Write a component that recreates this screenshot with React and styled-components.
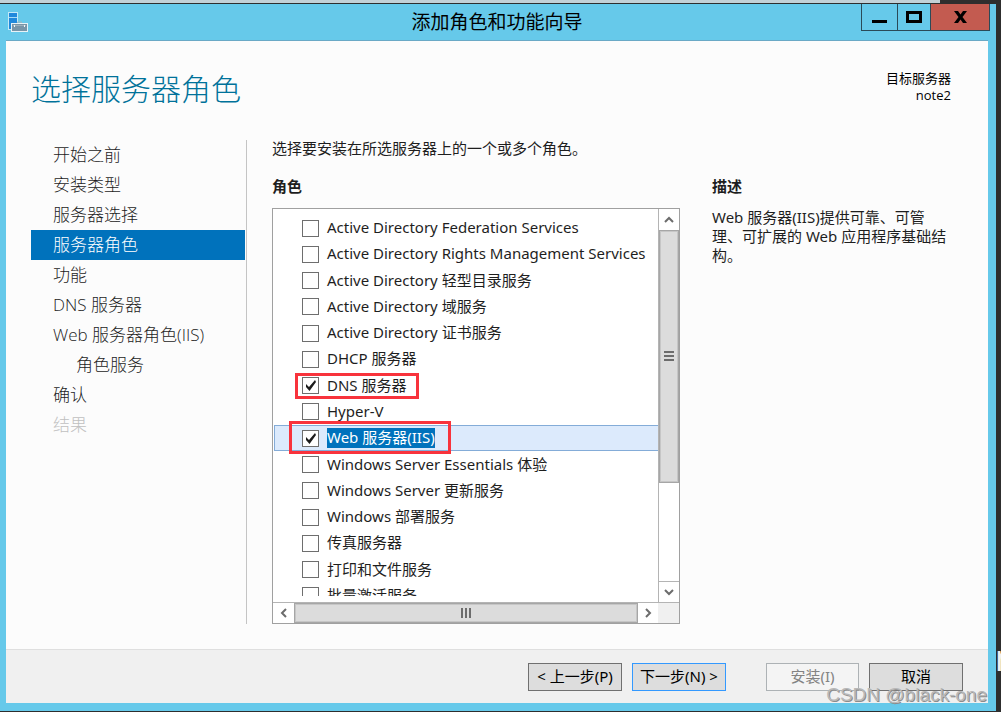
import { useState } from 'react';
import styled, { createGlobalStyle } from 'styled-components';


const GlobalStyle = createGlobalStyle`
    * {
        box-sizing: border-box;
    }

    body {
        margin: 0;
        background: #2e2e2e;
        color: #1e1e1e;
        font-family: 'Noto Sans', 'Noto Sans CJK SC', sans-serif;
        font-size: 15px;
        line-height: 20px;
    }

    button, input {
        font: inherit;
        margin: 0;
    }
`;

const Desktop = styled.div`
    position: relative;
    display: flex;
    flex-direction: column;
    height: 100vh;
    min-height: 480px;
    padding: 0 5px 1px 0;
    overflow: hidden;
`;

const BackgroundStrip = styled.div`
    flex: none;
    height: 3px;
    margin: 0 56px 1px 0;
    background: #c3d1d7;
`;

const BackgroundText = styled.span`
    position: absolute;
    right: -16px;
    bottom: 36px;
    color: #f0f0f0;
    font-size: 36px;
    line-height: 36px;
`;

const Window = styled.div`
    flex: 1;
    min-height: 0;
    display: flex;
    flex-direction: column;
    padding: 0 8px 8px 6px;
    background: #66c9ea;
`;

const TitleBar = styled.header`
    flex: none;
    display: grid;
    grid-template-columns: 129px 1fr 129px;
    height: 36px;
`;

const AppIcon = styled.svg`
    width: 20px;
    height: 20px;
    margin: 8px 0 0 2px;
`;

const WindowTitle = styled.div`
    padding-top: 4px;
    color: #000;
    font-size: 19px;
    line-height: 28px;
    text-align: center;
`;

const WindowControls = styled.div`
    display: flex;
    justify-content: flex-end;
    align-items: flex-start;
    margin-right: -2px;
`;

const ControlButton = styled.button`
    display: grid;
    place-items: center;
    width: ${(props) => props.$width};
    height: 27px;
    margin-left: -1px;
    padding: 0;
    border: 1px solid #2a4a58;
    border-top: 0;
    background: ${(props) => (props.$danger ? '#c35b50' : 'transparent')};
`;

const Client = styled.div`
    flex: 1;
    min-height: 0;
    display: flex;
    flex-direction: column;
    border-top: 1px solid #6aa9c6;
    background: #fcfcfc;
`;

const PageHeader = styled.div`
    flex: none;
    display: flex;
    justify-content: space-between;
    padding: 29px 37px 32px 25px;
`;

const PageTitle = styled.h1`
    margin: 0;
    color: #00729a;
    font-size: 30px;
    font-weight: 300;
    line-height: 38px;
`;

const Target = styled.div`
    color: #000;
    font-family: 'Open Sans', 'Noto Sans CJK SC', sans-serif;
    font-size: 13px;
    line-height: 17px;
    text-align: right;
`;

const PageBody = styled.div`
    flex: 1;
    min-height: 0;
    display: grid;
    grid-template-columns: 216px minmax(0, 1fr) 240px;
    padding: 0 36px 25px 25px;
`;

const Steps = styled.nav`
    padding-right: 1px;
    border-right: 1px solid #c4c4c4;
`;

const Step = styled.a`
    display: block;
    height: 30px;
    padding-left: ${(props) => (props.$nested ? '45px' : '22px')};
    background: ${(props) => (props.$current ? '#0072bc' : 'transparent')};
    color: ${(props) => (props.$current ? '#fff' : props.$disabled ? '#c0c0c0' : '#1c1c1c')};
    font-family: 'Open Sans', 'Noto Sans CJK SC', sans-serif;
    font-size: 17px;
    font-weight: 300;
    line-height: 30px;
    text-decoration: none;
    white-space: nowrap;
`;

const RolesColumn = styled.section`
    display: flex;
    flex-direction: column;
    min-height: 0;
    padding: 0 32px 0 25px;
`;

const Intro = styled.p`
    margin: 0 0 20px;
    line-height: 16px;
    white-space: nowrap;
`;

const Heading = styled.h2`
    margin: 0 0 12px;
    font-size: 15px;
    font-weight: 700;
    line-height: 20px;
`;

const ListBox = styled.div`
    flex: 1;
    min-height: 0;
    display: grid;
    grid-template-columns: minmax(0, 1fr) 21px;
    grid-template-rows: minmax(0, 1fr) 21px;
    border: 1px solid #a0a0a0;
    background: #fff;
`;

const Viewport = styled.div`
    margin-bottom: 6px;
    padding: 6px 0 0 1px;
    overflow: hidden;
`;

const RoleList = styled.ul`
    display: grid;
    grid-template-rows: repeat(15, minmax(0, 1fr));
    height: 394px;
    margin: 0;
    padding: 0;
    list-style: none;
`;

const RoleRow = styled.li`
    position: relative;
    display: flex;
    align-items: center;
    padding-left: 27px;
    border: 1px solid ${(props) => (props.$selected ? '#84acd8' : 'transparent')};
    border-right: 0;
    background: ${(props) => (props.$selected ? '#dceafc' : 'transparent')};
`;

const RoleLabel = styled.label`
    display: flex;
    align-items: center;
    gap: 8px;
    white-space: nowrap;
`;

const CheckWrap = styled.span`
    display: grid;
    flex: none;
    width: 17px;
    height: 17px;

    > * {
        grid-area: 1 / 1;
    }
`;

const CheckInput = styled.input`
    appearance: none;
    width: 17px;
    height: 17px;
    border: 1px solid #6e6e6e;
    background: #fff;
`;

const CheckMark = styled.svg`
    width: 17px;
    height: 17px;
    pointer-events: none;
`;

const RoleName = styled.span`
    height: 20px;
    line-height: 18px;
    background: ${(props) => (props.$selected ? '#0072bc' : 'transparent')};
    color: ${(props) => (props.$selected ? '#fff' : 'inherit')};
`;

// red annotation frame laid over a row
const Mark = styled.span`
    position: absolute;
    z-index: 1;
    inset: ${(props) => (props.$large ? '-5px auto -4px 14px' : '-1px auto -1px 20px')};
    width: ${(props) => (props.$large ? '162px' : '124px')};
    border: 3px solid #f8333c;
    pointer-events: none;
`;

const VerticalBar = styled.div`
    display: flex;
    flex-direction: column;
    border-left: 1px solid #b4b4b4;
`;

const HorizontalBar = styled.div`
    display: flex;
    padding-left: 1px;
    border-top: 1px solid #b4b4b4;
`;

const Corner = styled.div`
    border-top: 1px solid #b4b4b4;
    background: #f0f0f0;
`;

const Track = styled.div`
    flex: 1;
    min-height: 0;
    display: flex;
    flex-direction: column;
`;

const Thumb = styled.div`
    flex: none;
    display: grid;
    place-items: center;
    height: ${(props) => props.$size};
    border: 1px solid #a6a6a6;
    box-shadow: inset 0 0 0 1px #c6c6c6;
    background: #dcdcdc;
`;

const ArrowButton = styled.button`
    flex: none;
    display: grid;
    place-items: center;
    width: 20px;
    height: ${(props) => (props.$vertical ? '21px' : '20px')};
    padding: 0;
    border: 0 solid #b4b4b4;
    border-top-width: ${(props) => (props.$down ? '1px' : 0)};
    background: #fff;
`;

const Description = styled.section`
    padding-top: 36px;
`;

const DescriptionText = styled.p`
    margin: 0;
    line-height: 19px;
`;

const Footer = styled.footer`
    flex: none;
    display: flex;
    justify-content: flex-end;
    gap: 10px;
    padding: 13px 25px 12px;
    border-top: 1px solid #dfdfdf;
    background: #f0f0f0;
`;

const FooterButton = styled.button`
    width: 94px;
    height: 28px;
    padding: 0 0 2px;
    border: 1px solid ${(props) => (props.$primary ? '#3399ff' : '#707070')};
    background: #ddd;
    color: #000;
    line-height: 24px;
    white-space: nowrap;

    &:disabled {
        width: 93px;
        margin-left: 30px;
        border-color: #adb2b5;
        background: #f4f4f4;
        color: #838383;
    }
`;

const Watermark = styled.div`
    position: absolute;
    right: 14px;
    bottom: 5px;
    color: #b8b8b8;
    font-family: 'Liberation Sans', sans-serif;
    font-size: 19px;
    line-height: 24px;
    text-shadow: 1px 1px 0 #8c8c8c;
    pointer-events: none;
`;


const steps = [
    { label: '开始之前' },
    { label: '安装类型' },
    { label: '服务器选择' },
    { label: '服务器角色', current: true },
    { label: '功能' },
    { label: 'DNS 服务器' },
    { label: 'Web 服务器角色(IIS)' },
    { label: '角色服务', nested: true },
    { label: '确认' },
    { label: '结果', disabled: true },
];

const roles = [
    'Active Directory Federation Services',
    'Active Directory Rights Management Services',
    'Active Directory 轻型目录服务',
    'Active Directory 域服务',
    'Active Directory 证书服务',
    'DHCP 服务器',
    'DNS 服务器',
    'Hyper-V',
    'Web 服务器(IIS)',
    'Windows Server Essentials 体验',
    'Windows Server 更新服务',
    'Windows 部署服务',
    '传真服务器',
    '打印和文件服务',
    '批量激活服务',
];

const arrows = {
    up: 'M1 7 L5 3 L9 7',
    down: 'M1 3 L5 7 L9 3',
    left: 'M7 1 L3 5 L7 9',
    right: 'M3 1 L7 5 L3 9',
};

const Arrow = ({ direction }) => (
    <svg width="10" height="10" viewBox="0 0 10 10">
        <path d={arrows[direction]} fill="none" stroke="#6c6c6c" strokeWidth="2" />
    </svg>
);

const ServerIcon = () => (
    <AppIcon viewBox="0 0 20 20" aria-hidden="true">
        <rect x="0.5" y="0.5" width="9" height="17" fill="#2089dc" stroke="#c3e9f8" />
        <path d="M1 5.5h8" stroke="#a5dcf7" />
        <path d="M9.5 11.5v-1.5h4v1.5" fill="none" stroke="#a3b4bd" />
        <rect x="3.5" y="11.5" width="16" height="8" fill="#7895a8" stroke="#e7f2f7" />
        <path d="M5 13.5h13" stroke="#9db0bc" />
        <path d="M6.5 13v2M16.5 13v2" stroke="#eef4f7" />
    </AppIcon>
);

const RoleItem = ({ name, checked, selected, onToggle }) => (
    <RoleRow $selected={selected}>
        <RoleLabel>
            <CheckWrap>
                <CheckInput type="checkbox" checked={checked} onChange={onToggle} />
                {checked && (
                    <CheckMark viewBox="0 0 17 17" aria-hidden="true">
                        <path d="M4 7 L7 10 L13 3 L14 5 L7.5 14 L4 10 Z" fill="#1c1c1c" />
                    </CheckMark>
                )}
            </CheckWrap>
            <RoleName $selected={selected}>{name}</RoleName>
        </RoleLabel>
        {checked && <Mark $large={selected} />}
    </RoleRow>
);

const App = () => {
    const [checked, setChecked] = useState(['DNS 服务器', 'Web 服务器(IIS)']);

    const toggleRole = (name) => {
        setChecked(checked.includes(name) ? checked.filter((item) => item !== name) : [...checked, name]);
    };

    return (
        <Desktop>
            <GlobalStyle />
            <BackgroundStrip />
            <Window>
                <TitleBar>
                    <ServerIcon />
                    <WindowTitle>添加角色和功能向导</WindowTitle>
                    <WindowControls>
                        <ControlButton $width="37px" aria-label="最小化">
                            <svg width="15" height="16"><path d="M0 12.5h15" stroke="#000" strokeWidth="3" /></svg>
                        </ControlButton>
                        <ControlButton $width="34px" aria-label="最大化">
                            <svg width="16" height="12">
                                <rect x="1.5" y="1.5" width="13" height="9" fill="none" stroke="#000" strokeWidth="3" />
                            </svg>
                        </ControlButton>
                        <ControlButton $width="60px" $danger aria-label="关闭">
                            <svg width="13" height="12" viewBox="0 0 13 12">
                                <path d="M0 0h4l2.5 3.5L9 0h4L8.5 6l4.5 6H9L6.5 8.5 4 12H0l4.5-6z" fill="#000" />
                            </svg>
                        </ControlButton>
                    </WindowControls>
                </TitleBar>

                <Client>
                    <PageHeader>
                        <PageTitle>选择服务器角色</PageTitle>
                        <Target>
                            <div>目标服务器</div>
                            <div>note2</div>
                        </Target>
                    </PageHeader>

                    <PageBody>
                        <Steps>
                            {steps.map((step) => (
                                <Step
                                    key={step.label}
                                    href="#"
                                    $current={step.current}
                                    $nested={step.nested}
                                    $disabled={step.disabled}
                                    aria-disabled={step.disabled}
                                >
                                    {step.label}
                                </Step>
                            ))}
                        </Steps>

                        <RolesColumn>
                            <Intro>选择要安装在所选服务器上的一个或多个角色。</Intro>
                            <Heading>角色</Heading>
                            <ListBox>
                                <Viewport>
                                    <RoleList>
                                        {roles.map((name) => (
                                            <RoleItem
                                                key={name}
                                                name={name}
                                                checked={checked.includes(name)}
                                                selected={name === 'Web 服务器(IIS)'}
                                                onToggle={() => toggleRole(name)}
                                            />
                                        ))}
                                    </RoleList>
                                </Viewport>
                                <VerticalBar>
                                    <ArrowButton $vertical aria-label="向上"><Arrow direction="up" /></ArrowButton>
                                    <Track>
                                        <Thumb $size="72%">
                                            <svg width="10" height="10">
                                                <path d="M0 1h10M0 5h10M0 9h10" stroke="#6c6c6c" strokeWidth="2" />
                                            </svg>
                                        </Thumb>
                                    </Track>
                                    <ArrowButton $vertical $down aria-label="向下"><Arrow direction="down" /></ArrowButton>
                                </VerticalBar>
                                <HorizontalBar>
                                    <ArrowButton aria-label="向左"><Arrow direction="left" /></ArrowButton>
                                    <Track>
                                        <Thumb $size="20px">
                                            <svg width="10" height="10">
                                                <path d="M1 0v10M5 0v10M9 0v10" stroke="#6c6c6c" strokeWidth="2" />
                                            </svg>
                                        </Thumb>
                                    </Track>
                                    <ArrowButton aria-label="向右"><Arrow direction="right" /></ArrowButton>
                                </HorizontalBar>
                                <Corner />
                            </ListBox>
                        </RolesColumn>

                        <Description>
                            <Heading>描述</Heading>
                            <DescriptionText>
                                Web 服务器(IIS)提供可靠、可管理、可扩展的 Web 应用程序基础结构。
                            </DescriptionText>
                        </Description>
                    </PageBody>

                    <Footer>
                        <FooterButton>&lt; 上一步(P)</FooterButton>
                        <FooterButton $primary>下一步(N) &gt;</FooterButton>
                        <FooterButton disabled>安装(I)</FooterButton>
                        <FooterButton>取消</FooterButton>
                    </Footer>
                </Client>
            </Window>
            <BackgroundText>n</BackgroundText>
            <Watermark>CSDN @black-one</Watermark>
        </Desktop>
    );
};

export default App;
